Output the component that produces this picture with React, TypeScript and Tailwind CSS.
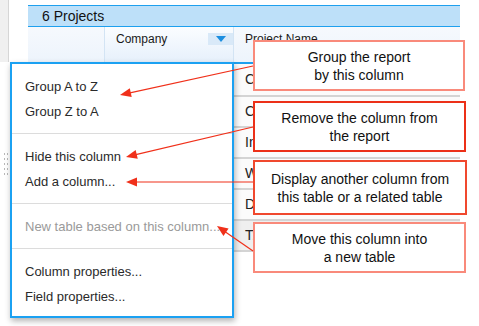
import React from 'react';

const menuGroups = [
  {items: ['Group A to Z', 'Group Z to A']},
  {items: ['Hide this column', 'Add a column...']},
  {items: ['New table based on this column...'], disabled: true},
  {items: ['Column properties...', 'Field properties...'], last: true},
];

// only the first letters peek out from behind the callouts
const rows = ['Co', 'Ca', 'In', 'Wi', 'Do', 'T:'];

const callouts = [
  {lines: ['Group the report', 'by this column'], cls: 'top-[40px] w-[212px] h-[51px] border-[#f98a7b]'},
  {lines: ['Remove the column from', 'the report'], cls: 'top-[101px] w-[213px] h-[51px] border-[#ec3018]'},
  {lines: ['Display another column from', 'this table or a related table'], cls: 'top-[160px] w-[214px] h-[55px] border-[#f0482e]'},
  {lines: ['Move this column into', 'a new table'], cls: 'top-[222px] w-[213px] h-[51px] border-[#f98a7b]'},
];

// line start (callout edge) -> arrow tip
const arrows = [
  {from: [253, 66], to: [120, 95]},
  {from: [253, 127], to: [126, 157]},
  {from: [253, 182], to: [126, 182]},
  {from: [253, 251], to: [217, 226]},
];

function headPoints(from: number[], to: number[]) {
  const dx = to[0] - from[0];
  const dy = to[1] - from[1];
  const len = Math.sqrt(dx * dx + dy * dy);
  const ux = dx / len;
  const uy = dy / len;
  const bx = to[0] - ux * 11;
  const by = to[1] - uy * 11;
  const nx = -uy * 4.5;
  const ny = ux * 4.5;
  return `${to[0]},${to[1]} ${bx + nx},${by + ny} ${bx - nx},${by - ny}`;
}

function Arrows() {
  return (
    <svg className="absolute left-0 top-0 pointer-events-none" width="479" height="326">
      {arrows.map((a, i) => {
        const dx = a.to[0] - a.from[0];
        const dy = a.to[1] - a.from[1];
        const len = Math.sqrt(dx * dx + dy * dy);
        const ex = a.to[0] - (dx / len) * 9;
        const ey = a.to[1] - (dy / len) * 9;
        return (
          <g key={i}>
            <line x1={a.from[0]} y1={a.from[1]} x2={ex} y2={ey} stroke="#f0301a" strokeWidth="1.2" />
            <polygon points={headPoints(a.from, a.to)} fill="#f0301a" />
          </g>
        );
      })}
    </svg>
  );
}

export default function App() {
  return (
    <div className="relative w-[479px] h-[326px] bg-white overflow-hidden font-['Liberation_Sans',Arial,sans-serif]">
      <div className="flex items-start">
        <div className="w-[9px] h-[62px] bg-[#f0f0f0] border-r border-[#d6d6d6] shrink-0" />
        <div className="ml-[19px] mt-[5px] w-[432px]">
          <div className="h-[22px] bg-[#bde0f9] border-y border-[#1ea0ee] pl-[14px] flex items-center text-[14px] text-[#111]">
            6 Projects
          </div>
          <div className="flex h-[37px] border-b-2 border-[#1ea0ee] bg-gradient-to-b from-[#f6f9fd] to-[#edf4fc] text-[12px] text-[#1a1a1a]">
            <div className="w-[77px] border-r border-[#d3e4f4]" />
            <div className="w-[129px] border-r border-[#d3e4f4] bg-gradient-to-b from-[#fbfdff] to-[#e6f0fb] flex justify-between items-start">
              <span className="pl-[11px] pt-[3px]">Company</span>
              <div className="mt-[6px] w-[25px] h-[12px] bg-[#d9e9f8] flex items-center justify-center">
                <div className="w-0 h-0 border-x-[5px] border-x-transparent border-t-[6px] border-t-[#1b8ee0]" />
              </div>
            </div>
            <div className="flex-1 pl-[11px] pt-[3px]">Project Name</div>
          </div>
          {rows.map((r, i) => (
            <div
              key={r}
              className={`flex border-b-2 border-[#d4d4d4] ${i === 0 ? 'h-[33px]' : 'h-[31px]'} ${i === 5 ? 'bg-[#efefef]' : 'bg-[#fbfbfb]'}`}
            >
              <div className="w-[206px]" />
              <div className="w-[19px] overflow-hidden pl-[11px] flex items-center text-[14px] text-[#222] whitespace-nowrap">
                {r}
              </div>
            </div>
          ))}
        </div>
      </div>

      <div className="absolute left-[4px] top-[153px] flex flex-col gap-[3px]">
        {[0, 1, 2, 3, 4].map((d) => (
          <div key={d} className="flex gap-[2px]">
            <div className="w-[1px] h-[2px] bg-[#b8b8b8]" />
            <div className="w-[1px] h-[2px] bg-[#b8b8b8]" />
          </div>
        ))}
      </div>

      <div className="absolute left-[10px] top-[62px] w-[224px] h-[256px] bg-white border-2 border-[#1ba1f2] shadow-[1px_3px_6px_rgba(0,0,0,0.3)] text-[13px]">
        {menuGroups.map((g, gi) => (
          <div
            key={gi}
            className={`pt-[10px] ${g.last ? 'pb-[7px]' : 'pb-[9px] border-b border-[#dcdcdc]'}`}
          >
            {g.items.map((it) => (
              <div
                key={it}
                className={`h-[25px] pl-[13px] flex items-center ${g.disabled ? 'text-[#9a9a9a]' : 'text-[#2a2a2a]'}`}
              >
                {it}
              </div>
            ))}
          </div>
        ))}
      </div>

      {callouts.map((c) => (
        <div
          key={c.lines[0]}
          className={`absolute left-[253px] bg-white border-2 flex flex-col items-center justify-center text-[14px] leading-[18px] text-[#111] ${c.cls}`}
        >
          {c.lines.map((l) => (
            <span key={l}>{l}</span>
          ))}
        </div>
      ))}

      <Arrows />
    </div>
  );
}
